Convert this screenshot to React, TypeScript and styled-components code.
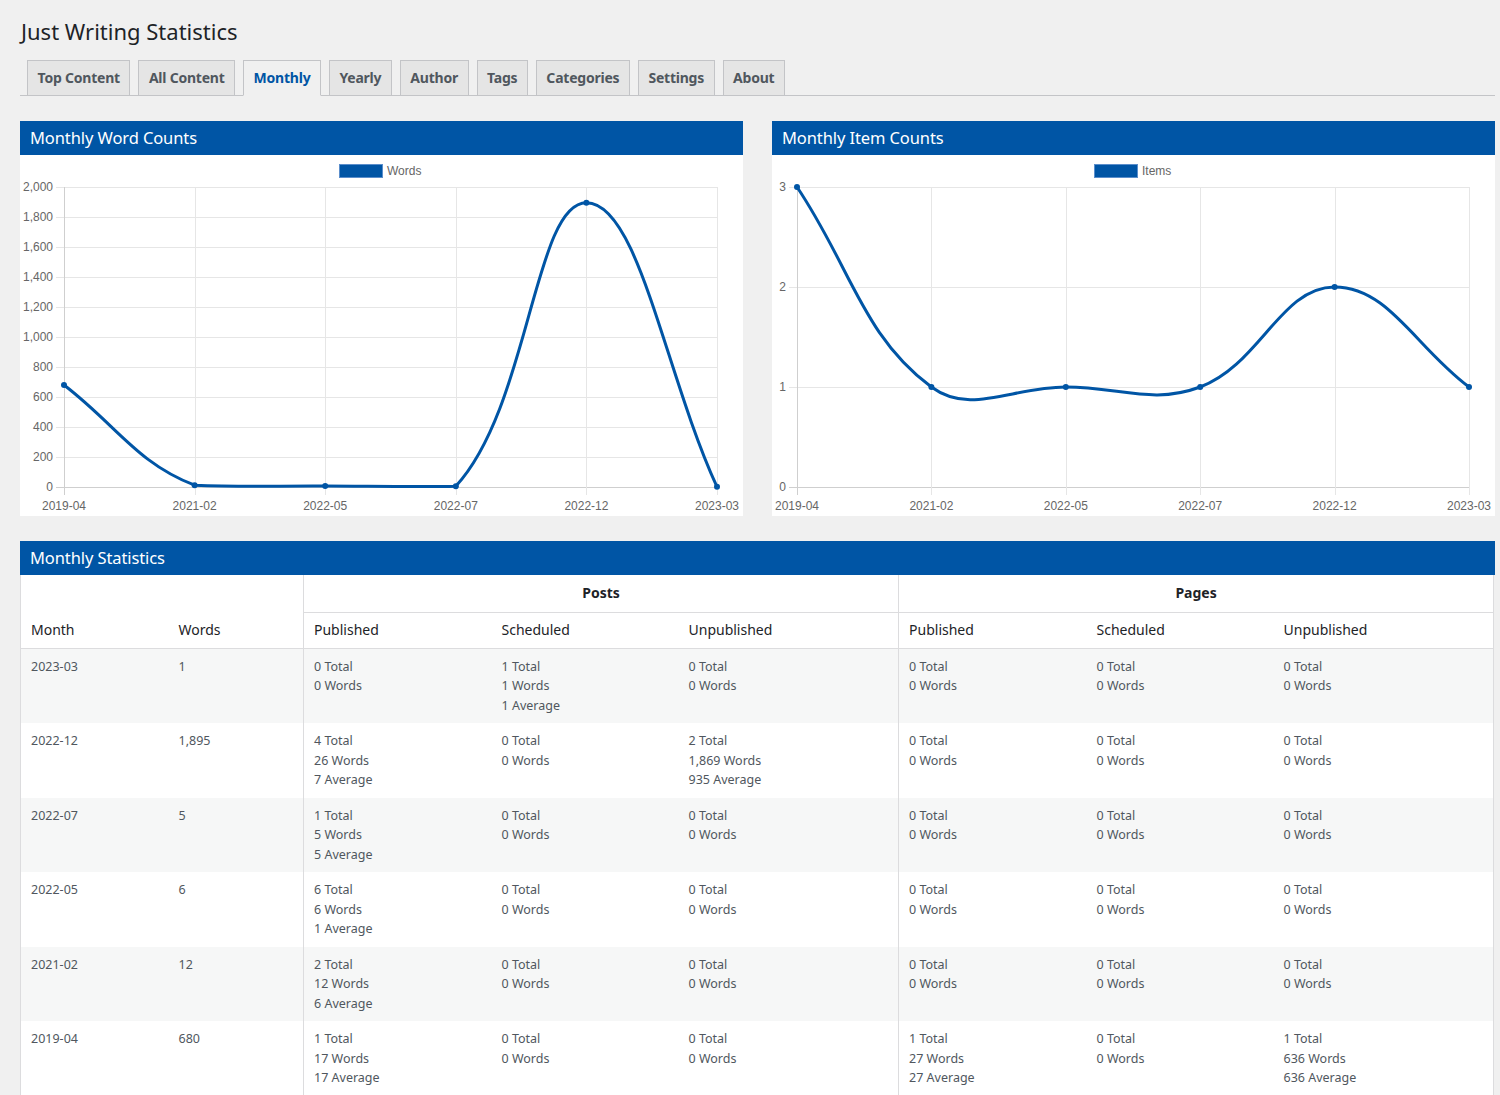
import React from "react";
import styled, { createGlobalStyle } from "styled-components";

const GlobalStyle = createGlobalStyle`
  html, body { margin: 0; padding: 0; background: #f0f0f0; }
  body { font-family: "Noto Sans", "Open Sans", sans-serif; color: #3c434a; }
  * { box-sizing: border-box; }
`;

const BLUE = "#0055a5";

const Page = styled.div`
  padding: 0 5px 0 20px;
  width: 1500px;
  height: 1095px;
  overflow: hidden;
`;

const Title = styled.h1`
  margin: 0;
  padding: 16px 0 0 1px;
  font-size: 22px;
  line-height: 30px;
  font-weight: 400;
  color: #1d2327;
`;

const TabBar = styled.nav`
  display: flex;
  gap: 8px;
  margin-top: 14px;
  padding-left: 7px;
  border-bottom: 1px solid #c3c4c7;
  height: 36px;
`;

const Tab = styled.a<{ $active?: boolean }>`
  display: flex;
  align-items: center;
  height: 36px;
  padding: 0 9.5px 1px;
  font-size: 14px;
  font-weight: 700;
  letter-spacing: -0.22px;
  color: ${(p) => (p.$active ? BLUE : "#50575e")};
  background: ${(p) => (p.$active ? "#f0f0f0" : "#e5e5e5")};
  border: 1px solid #c3c4c7;
  border-bottom-color: ${(p) => (p.$active ? "#f0f0f0" : "#c3c4c7")};
  text-decoration: none;
  white-space: nowrap;
`;

const ChartsRow = styled.div`
  display: grid;
  grid-template-columns: 723px 723px;
  gap: 29px;
  margin-top: 25px;
`;

const Panel = styled.section`
  background: #fff;
`;

const PanelHeader = styled.h2`
  margin: 0;
  height: 34px;
  padding: 0 10px 1px;
  display: flex;
  align-items: center;
  background: ${BLUE};
  color: #fff;
  font-size: 16.5px;
  font-weight: 400;
  letter-spacing: -0.1px;
`;

const ChartBody = styled.div`
  height: 361px;
`;

const ChartSvg = styled.svg`
  display: block;
  font-family: "Liberation Sans", Arial, sans-serif;
  font-size: 12px;
`;

const StatsPanel = styled.section`
  margin-top: 25px;
  width: 1475px;
`;

const StatsTable = styled.table`
  width: 1474px;
  border-collapse: collapse;
  table-layout: fixed;
  background: #fff;
  border-left: 1px solid #dcdcde;
  border-right: 1px solid #dcdcde;
`;

const HeadCell = styled.th<{ $divider?: boolean; $group?: boolean; $tall?: boolean }>`
  text-align: ${(p) => (p.$group ? "center" : "left")};
  vertical-align: ${(p) => (p.$tall ? "bottom" : "middle")};
  font-weight: ${(p) => (p.$group ? 700 : 400)};
  font-size: 14px;
  color: #1d2327;
  padding: ${(p) => (p.$tall ? "0 10px 9px" : "0 10px 1px")};
  height: ${(p) => (p.$group ? "37px" : "36px")};
  border-left: ${(p) => (p.$divider ? "1px solid #dcdcde" : "none")};
  border-bottom: 1px solid #dcdcde;
`;

const Row = styled.tr<{ $striped?: boolean }>`
  background: ${(p) => (p.$striped ? "#f6f7f7" : "#fff")};
  height: 74.6px;
`;

const Cell = styled.td<{ $divider?: boolean }>`
  vertical-align: top;
  padding: 8px 10px;
  font-size: 12.5px;
  line-height: 19.5px;
  color: #50575e;
  border-left: ${(p) => (p.$divider ? "1px solid #dcdcde" : "none")};
`;

const Line = styled.div`
  white-space: nowrap;
`;

type Pt = { x: number; y: number };

function buildPath(pts: Pt[], area: { left: number; right: number; top: number; bottom: number }) {
  const t = 0.4;
  const clamp = (v: number, a: number, b: number) => Math.max(a, Math.min(b, v));
  const cps = pts.map((cur, i) => {
    const prev = i > 0 ? pts[i - 1] : cur;
    const next = i < pts.length - 1 ? pts[i + 1] : cur;
    const d01 = Math.hypot(cur.x - prev.x, cur.y - prev.y);
    const d12 = Math.hypot(next.x - cur.x, next.y - cur.y);
    let s01 = d01 / (d01 + d12);
    let s12 = d12 / (d01 + d12);
    if (isNaN(s01)) s01 = 0;
    if (isNaN(s12)) s12 = 0;
    const fa = t * s01;
    const fb = t * s12;
    return {
      prev: {
        x: clamp(cur.x - fa * (next.x - prev.x), area.left, area.right),
        y: clamp(cur.y - fa * (next.y - prev.y), area.top, area.bottom),
      },
      next: {
        x: clamp(cur.x + fb * (next.x - prev.x), area.left, area.right),
        y: clamp(cur.y + fb * (next.y - prev.y), area.top, area.bottom),
      },
    };
  });
  let d = `M${pts[0].x},${pts[0].y}`;
  for (let i = 1; i < pts.length; i++) {
    const a = cps[i - 1].next;
    const b = cps[i].prev;
    d += ` C${a.x},${a.y} ${b.x},${b.y} ${pts[i].x},${pts[i].y}`;
  }
  return d;
}

type ChartProps = {
  labels: string[];
  values: number[];
  yMax: number;
  yStep: number;
  left: number;
  legend: string;
  legendX: number;
};

function LineChart({ labels, values, yMax, yStep, left, legend, legendX }: ChartProps) {
  const right = 697;
  const top = 32;
  const bottom = 332;
  const ticks: number[] = [];
  for (let v = 0; v <= yMax; v += yStep) ticks.push(v);
  const xs = labels.map((_, i) => left + ((right - left) * i) / (labels.length - 1));
  const yOf = (v: number) => bottom - (v / yMax) * (bottom - top);
  const pts = values.map((v, i) => ({ x: xs[i], y: yOf(v) }));
  const d = buildPath(pts, { left, right, top, bottom });
  return (
    <ChartSvg width={723} height={361} viewBox="0 0 723 361">
      <rect x={legendX + 0.5} y={9.5} width={43} height={13} fill={BLUE} stroke="#5b8ecb" strokeWidth={1} />
      <text x={legendX + 48} y={19.5} fill="#666">{legend}</text>
      {ticks.map((v) => (
        <g key={v}>
          <line x1={left - 8} x2={right} y1={yOf(v) + 0.5} y2={yOf(v) + 0.5} stroke={v === 0 ? "#cfcfcf" : "#e6e6e6"} strokeWidth={1} />
          <text x={left - 11} y={yOf(v) + 4} textAnchor="end" fill="#666">
            {v.toLocaleString("en-US")}
          </text>
        </g>
      ))}
      {xs.map((x, i) => (
        <g key={labels[i]}>
          <line x1={Math.round(x) + 0.5} x2={Math.round(x) + 0.5} y1={top} y2={bottom + 8} stroke={i === 0 ? "#cfcfcf" : "#e6e6e6"} strokeWidth={1} />
          <text x={x} y={355} textAnchor="middle" fill="#666">
            {labels[i]}
          </text>
        </g>
      ))}
      <path d={d} fill="none" stroke={BLUE} strokeWidth={3} />
      {pts.map((p, i) => (
        <circle key={i} cx={p.x} cy={p.y} r={3} fill={BLUE} />
      ))}
    </ChartSvg>
  );
}

const months = ["2019-04", "2021-02", "2022-05", "2022-07", "2022-12", "2023-03"];

type Group = string[];
const rows: { month: string; words: string; cells: Group[] }[] = [
  {
    month: "2023-03",
    words: "1",
    cells: [
      ["0 Total", "0 Words"],
      ["1 Total", "1 Words", "1 Average"],
      ["0 Total", "0 Words"],
      ["0 Total", "0 Words"],
      ["0 Total", "0 Words"],
      ["0 Total", "0 Words"],
    ],
  },
  {
    month: "2022-12",
    words: "1,895",
    cells: [
      ["4 Total", "26 Words", "7 Average"],
      ["0 Total", "0 Words"],
      ["2 Total", "1,869 Words", "935 Average"],
      ["0 Total", "0 Words"],
      ["0 Total", "0 Words"],
      ["0 Total", "0 Words"],
    ],
  },
  {
    month: "2022-07",
    words: "5",
    cells: [
      ["1 Total", "5 Words", "5 Average"],
      ["0 Total", "0 Words"],
      ["0 Total", "0 Words"],
      ["0 Total", "0 Words"],
      ["0 Total", "0 Words"],
      ["0 Total", "0 Words"],
    ],
  },
  {
    month: "2022-05",
    words: "6",
    cells: [
      ["6 Total", "6 Words", "1 Average"],
      ["0 Total", "0 Words"],
      ["0 Total", "0 Words"],
      ["0 Total", "0 Words"],
      ["0 Total", "0 Words"],
      ["0 Total", "0 Words"],
    ],
  },
  {
    month: "2021-02",
    words: "12",
    cells: [
      ["2 Total", "12 Words", "6 Average"],
      ["0 Total", "0 Words"],
      ["0 Total", "0 Words"],
      ["0 Total", "0 Words"],
      ["0 Total", "0 Words"],
      ["0 Total", "0 Words"],
    ],
  },
  {
    month: "2019-04",
    words: "680",
    cells: [
      ["1 Total", "17 Words", "17 Average"],
      ["0 Total", "0 Words"],
      ["0 Total", "0 Words"],
      ["1 Total", "27 Words", "27 Average"],
      ["0 Total", "0 Words"],
      ["1 Total", "636 Words", "636 Average"],
    ],
  },
];

const tabs = ["Top Content", "All Content", "Monthly", "Yearly", "Author", "Tags", "Categories", "Settings", "About"];
const colWidths = [148, 135, 188, 187, 220, 188, 187, 220];
const subHeads = ["Published", "Scheduled", "Unpublished"];

export default function App() {
  return (
    <>
      <GlobalStyle />
      <Page>
        <Title>Just Writing Statistics</Title>
        <TabBar>
          {tabs.map((t) => (
            <Tab key={t} href="#" $active={t === "Monthly"}>
              {t}
            </Tab>
          ))}
        </TabBar>
        <ChartsRow>
          <Panel>
            <PanelHeader>Monthly Word Counts</PanelHeader>
            <ChartBody>
              <LineChart
                labels={months}
                values={[680, 12, 6, 5, 1895, 1]}
                yMax={2000}
                yStep={200}
                left={44}
                legend="Words"
                legendX={319}
              />
            </ChartBody>
          </Panel>
          <Panel>
            <PanelHeader>Monthly Item Counts</PanelHeader>
            <ChartBody>
              <LineChart
                labels={months}
                values={[3, 1, 1, 1, 2, 1]}
                yMax={3}
                yStep={1}
                left={25}
                legend="Items"
                legendX={322}
              />
            </ChartBody>
          </Panel>
        </ChartsRow>
        <StatsPanel>
          <PanelHeader>Monthly Statistics</PanelHeader>
          <StatsTable>
            <colgroup>
              {colWidths.map((w, i) => (
                <col key={i} style={{ width: w }} />
              ))}
            </colgroup>
            <thead>
              <tr>
                <HeadCell rowSpan={2} $tall>
                  Month
                </HeadCell>
                <HeadCell rowSpan={2} $tall>
                  Words
                </HeadCell>
                <HeadCell colSpan={3} $group $divider>
                  Posts
                </HeadCell>
                <HeadCell colSpan={3} $group $divider>
                  Pages
                </HeadCell>
              </tr>
              <tr>
                {[...subHeads, ...subHeads].map((h, i) => (
                  <HeadCell key={i} $divider={i === 0 || i === 3}>
                    {h}
                  </HeadCell>
                ))}
              </tr>
            </thead>
            <tbody>
              {rows.map((r, ri) => (
                <Row key={r.month} $striped={ri % 2 === 0}>
                  <Cell>{r.month}</Cell>
                  <Cell>{r.words}</Cell>
                  {r.cells.map((c, ci) => (
                    <Cell key={ci} $divider={ci === 0 || ci === 3}>
                      {c.map((l) => (
                        <Line key={l}>{l}</Line>
                      ))}
                    </Cell>
                  ))}
                </Row>
              ))}
            </tbody>
          </StatsTable>
        </StatsPanel>
      </Page>
    </>
  );
}
